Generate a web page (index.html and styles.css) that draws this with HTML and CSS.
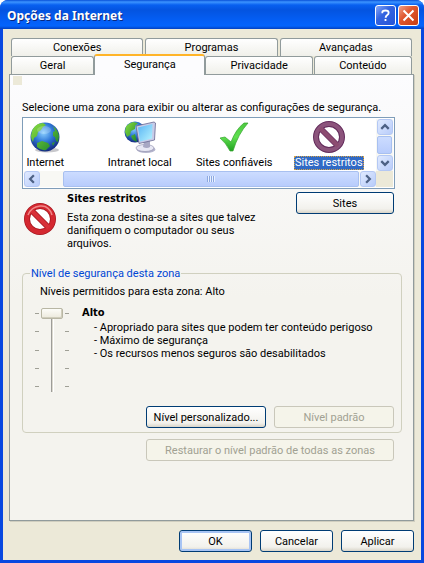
FILE: index.html
```html
<!DOCTYPE html>
<html lang="pt-BR">
<head>
    <meta charset="UTF-8">
    <meta name="viewport" content="width=device-width, initial-scale=1.0">
    <title>Opções da Internet</title>
    <link rel="stylesheet" href="styles.css">
</head>
<body>
<div class="window">
    <header class="title-bar">
        <h1>Opções da Internet</h1>
        <button class="title-button help" type="button" aria-label="Ajuda">
            <svg viewBox="0 0 21 21"><path d="M7 8V7q0-2 3.500-2t3.500 2.500q0 1.500-1.500 2.500t-2 3" fill="none" stroke="#fff" stroke-width="2"/><path d="M9.500 14.500h2v2h-2z" fill="#fff"/></svg>
        </button>
        <button class="title-button close" type="button" aria-label="Fechar">
            <svg viewBox="0 0 21 21"><path d="M5 5l11 11M16 5l-11 11" stroke="#fff" stroke-width="2.200"/></svg>
        </button>
    </header>

    <main class="content">
        <div class="tabs tabs-back">
            <button class="tab" type="button">Conexões</button>
            <button class="tab" type="button">Programas</button>
            <button class="tab" type="button">Avançadas</button>
        </div>
        <div class="tabs tabs-front">
            <button class="tab" type="button">Geral</button>
            <button class="tab active" type="button">Segurança</button>
            <button class="tab" type="button">Privacidade</button>
            <button class="tab" type="button">Conteúdo</button>
        </div>

        <section class="panel">
            <div class="corner-mark"></div>
            <p class="intro">Selecione uma zona para exibir ou alterar as configurações de segurança.</p>

            <div class="zone-box">
                <div class="zone-view">
                    <div class="zones">
                        <button class="zone" type="button">
                            <svg viewBox="0 0 32 32">
                                <defs>
                                    <radialGradient id="sea" cx=".45" cy=".35" r=".65">
                                        <stop offset="0" stop-color="#8cd0ff"/>
                                        <stop offset=".5" stop-color="#2f78d8"/>
                                        <stop offset="1" stop-color="#142a80"/>
                                    </radialGradient>
                                    <linearGradient id="land" x1="0" y1="0" x2="1" y2="1">
                                        <stop offset="0" stop-color="#8ce040"/>
                                        <stop offset="1" stop-color="#18802c"/>
                                    </linearGradient>
                                </defs>
                                <ellipse cx="18" cy="29" rx="12" ry="2.500" fill="#c8c8cc"/>
                                <circle cx="16" cy="16" r="14.500" fill="url(#sea)"/>
                                <path d="M2 15Q3 6 9 3l5-1 3 2-3 2-2 3-3 2-1 4-3 2-1 4Q2 18 2 15zM24 5q5 4 6 10l-1 6-2-1-1-4-2-1 0-4 2-1zM8 22l5-2 6 2 2 3-4 4q-5 1-9-3zM23 22l3-1-2 4z" fill="url(#land)"/>
                                <ellipse cx="15" cy="9" rx="7" ry="4" fill="#fff" opacity=".2"/>
                            </svg>
                            <span>Internet</span>
                        </button>
                        <button class="zone" type="button">
                            <svg viewBox="0 0 32 32">
                                <defs>
                                    <linearGradient id="screen" x1="0" y1="0" x2="1" y2="1">
                                        <stop offset="0" stop-color="#58b4f4"/>
                                        <stop offset="1" stop-color="#b8f4ff"/>
                                    </linearGradient>
                                </defs>
                                <circle cx="11" cy="11" r="10.500" fill="url(#sea)"/>
                                <path d="M1 11Q1 3 9 1l5 1-3 3 0 3-4 2-1 4-3 2zM7 15l4-2 2 8-4-2z" fill="url(#land)"/>
                                <ellipse cx="22" cy="28.500" rx="9.500" ry="3.500" fill="#b4b4cc"/>
                                <ellipse cx="21" cy="27" rx="9" ry="3.500" fill="#e8e8f4" stroke="#8888a8" stroke-width=".6"/>
                                <path d="M20 20l6-1v7q-3 2-7 0z" fill="#a8a8c4"/>
                                <path d="M12 5L30 1l1.500 1-1 17L15 22.500z" fill="#c8cce8" stroke="#686890" stroke-width=".8"/>
                                <path d="M14 6.500L28.500 3l-.5 14.500-12 3z" fill="url(#screen)"/>
                            </svg>
                            <span>Intranet local</span>
                        </button>
                        <button class="zone" type="button">
                            <svg viewBox="0 0 32 32">
                                <defs>
                                    <linearGradient id="check" x1="0" y1="0" x2="0" y2="1">
                                        <stop offset="0" stop-color="#4cc840"/>
                                        <stop offset=".5" stop-color="#60e050"/>
                                        <stop offset="1" stop-color="#20a020"/>
                                    </linearGradient>
                                </defs>
                                <path d="M2 17l5-1 6 5Q18 8 26 2l4 0Q20 13 15 30l-3 0Q8 22 2 17z" fill="url(#check)" stroke="#34a42c" stroke-width=".7"/>
                            </svg>
                            <span>Sites confiáveis</span>
                        </button>
                        <button class="zone selected" type="button">
                            <svg viewBox="0 0 32 32">
                                <circle cx="16" cy="16" r="13" fill="#fff" stroke="#642c5c" stroke-width="6"/>
                                <path d="M7 7l18 18" stroke="#703464" stroke-width="6"/>
                                <circle cx="16" cy="16" r="13" fill="none" stroke="#8c547c" stroke-width="4"/>
                                <path d="M7 7l18 18" stroke="#8c4c70" stroke-width="4"/>
                            </svg>
                            <span>Sites restritos</span>
                        </button>
                    </div>
                    <div class="scroll-v">
                        <button class="scroll-button" type="button" aria-label="Para cima"><svg viewBox="0 0 15 15"><path d="M3.500 9.500l4-4 4 4"/></svg></button>
                        <div class="scroll-thumb"></div>
                        <button class="scroll-button" type="button" aria-label="Para baixo"><svg viewBox="0 0 15 15"><path d="M3.500 5.500l4 4 4-4"/></svg></button>
                    </div>
                </div>
                <div class="scroll-h">
                    <button class="scroll-button" type="button" aria-label="Para a esquerda"><svg viewBox="0 0 15 15"><path d="M9.500 3.500l-4 4 4 4"/></svg></button>
                    <div class="scroll-thumb"><i class="grip"></i></div>
                    <button class="scroll-button" type="button" aria-label="Para a direita"><svg viewBox="0 0 15 15"><path d="M5.500 3.500l4 4-4 4"/></svg></button>
                    <div class="scroll-corner"></div>
                </div>
            </div>

            <div class="zone-info">
                <svg class="zone-icon" viewBox="0 0 32 32">
                    <circle cx="16" cy="16" r="13" fill="#fff" stroke="#a81820" stroke-width="6"/>
                    <path d="M7 7l18 18" stroke="#a81820" stroke-width="6"/>
                    <circle cx="16" cy="16" r="13" fill="none" stroke="#d42830" stroke-width="4.500"/>
                    <path d="M7 7l18 18" stroke="#d83038" stroke-width="4"/>
                    <path d="M4 12Q7 4 16 3t12 9" fill="none" stroke="#f08888" stroke-width="1.500"/>
                </svg>
                <div class="zone-text">
                    <h2>Sites restritos</h2>
                    <p>Esta zona destina-se a sites que talvez<br>danifiquem o computador ou seus<br>arquivos.</p>
                </div>
                <button class="button sites" type="button">Sites</button>
            </div>

            <fieldset class="level">
                <legend>Nível de segurança desta zona</legend>
                <label class="allowed" for="level">Níveis permitidos para esta zona: Alto</label>
                <div class="level-body">
                    <div class="slider">
                        <div class="ticks"><i></i><i></i><i></i><i></i><i></i></div>
                        <input id="level" type="range" min="0" max="4" value="4">
                        <div class="ticks"><i></i><i></i><i></i><i></i><i></i></div>
                    </div>
                    <div class="level-text">
                        <h2>Alto</h2>
                        <ul>
                            <li>- Apropriado para sites que podem ter conteúdo perigoso</li>
                            <li>- Máximo de segurança</li>
                            <li>- Os recursos menos seguros são desabilitados</li>
                        </ul>
                    </div>
                </div>
                <div class="level-buttons">
                    <button class="button" type="button">Nível personalizado...</button>
                    <button class="button" type="button" disabled>Nível padrão</button>
                </div>
            </fieldset>

            <button class="button restore" type="button" disabled>Restaurar o nível padrão de todas as zonas</button>
        </section>

        <footer class="actions">
            <button class="button default" type="button">OK</button>
            <button class="button" type="button">Cancelar</button>
            <button class="button" type="button">Aplicar</button>
        </footer>
    </main>
</div>
</body>
</html>
```

FILE: styles.css
```css
* {
    box-sizing: border-box;
}

body {
    margin: 0;
    background-color: #fff;
    color: #000;
    font: 11px/13px Roboto, Tahoma, sans-serif;
}

h1, h2, p, ul {
    margin: 0;
    padding: 0;
}

h2 {
    font: bold 11px/13px "DejaVu Sans Condensed", "DejaVu Sans", sans-serif;
}

button {
    font: inherit;
    color: inherit;
    padding: 0;
    white-space: nowrap;
}

svg {
    display: block;
}

.window {
    display: flex;
    flex-direction: column;
    min-height: 100vh;
    border-radius: 8px 8px 0 0;
    background-color: #0848e0;
    overflow: hidden;
}

/* Title bar */
.title-bar {
    display: flex;
    align-items: center;
    gap: 2px;
    height: 29px;
    padding: 2px 5px 0 7px;
    background: linear-gradient(#0850d8 0, #3c94ff 2px, #0860f0 5px, #0454e0 10px, #0460f8 22px, #0464fc 26px, #0340c0 29px);
}

.title-bar h1 {
    flex: 1;
    color: #fff;
    font: bold 12px/16px "Noto Sans", sans-serif;
    text-shadow: 1px 1px 0 #0a2880;
}

.title-button {
    width: 21px;
    height: 21px;
    border: 1px solid #fff;
    border-radius: 3px;
}

.title-button svg {
    width: 19px;
    height: 19px;
}

.help {
    background: linear-gradient(135deg, #88a8f8, #3464e0 40%, #2454d8);
}

.close {
    background: linear-gradient(135deg, #f0a088, #e05830 40%, #c83c10);
}

.content {
    flex: 1;
    display: flex;
    flex-direction: column;
    margin: 0 3px 3px;
    padding: 9px 7px 8px 6px;
    background-color: #ece9d8;
}

/* Tabs */
.tabs {
    display: grid;
    gap: 2px;
    height: 18px;
    padding: 0 2px;
}

.tabs-back {
    grid-template-columns: repeat(3, 1fr);
}

.tabs-front {
    grid-template-columns: 83fr 109fr 107fr 98fr;
    gap: 1px;
}

.tab {
    border: 1px solid #919b9c;
    border-bottom: 0;
    border-radius: 3px 3px 0 0;
    background: linear-gradient(#fff, #f0f0ea);
}

.tab.active {
    margin: -2px -1px -1px;
    border-top: 2px solid #ffb428;
    background: #fcfcfe;
    padding-bottom: 3px;
    z-index: 1;
}

.panel {
    flex: 1;
    padding: 1px 10px 10px 12px;
    border: 1px solid #919b9c;
    background: linear-gradient(#fcfcfe, #f4f3ee 50%);
    box-shadow: 1px 1px 0 #d0cebf;
}

.corner-mark {
    width: 9px;
    height: 9px;
    margin-left: -9px;
    background-color: #ece9d8;
}

.intro {
    margin: 16px 0 3px;
    white-space: nowrap;
}

/* Zone list */
.zone-box {
    margin-right: 8px;
    padding: 1px;
    border: 1px solid #7f9db9;
    background-color: #fff;
}

.zone-view {
    display: flex;
    height: 52px;
    overflow: hidden;
}

/* scrolled to the right end, so the first zone is partly outside */
.zones {
    flex: 1;
    display: grid;
    grid-template-columns: repeat(4, 1fr);
    margin-left: -26px;
}

.zone {
    display: flex;
    flex-direction: column;
    align-items: center;
    gap: 3px;
    padding-top: 2px;
    border: 0;
    background: none;
}

.zone svg {
    width: 32px;
    height: 32px;
}

.zone span {
    border: 1px solid transparent;
    line-height: 12px;
}

.zone.selected span {
    border: 1px dotted #d8a040;
    background-color: #316ac5;
    color: #fff;
}

.scroll-v {
    display: flex;
    flex-direction: column;
    width: 17px;
    padding: 0 1px;
    background-color: #f8f8f4;
}

.scroll-h {
    display: flex;
    height: 16px;
    background-color: #f8f8f4;
}

.scroll-button {
    flex: none;
    width: 16px;
    height: 16px;
    border: 1px solid #b4c8f4;
    border-radius: 3px;
    background: linear-gradient(135deg, #e0eaff, #b8ccfa);
}

.scroll-button svg {
    width: 14px;
    height: 14px;
    fill: none;
    stroke: #4d6185;
    stroke-width: 2.4;
}

.scroll-thumb {
    display: flex;
    align-items: center;
    justify-content: center;
    flex: 1;
    margin: 1px 0;
    border: 1px solid #a8c0f0;
    border-radius: 2px;
    background: linear-gradient(#ccdcff, #b8ccfc);
}

.scroll-h .scroll-thumb {
    margin: 0 1px 0 23px;
}

.grip {
    width: 8px;
    height: 6px;
    background: repeating-linear-gradient(90deg, #8ca8e0 0 1px, #e8f0ff 1px 2px);
}

.scroll-corner {
    width: 17px;
    background-color: #ece9d8;
}

/* Selected zone */
.zone-info {
    display: flex;
    align-items: flex-start;
    margin: 3px 9px 0 2px;
}

.zone-icon {
    width: 32px;
    height: 32px;
    margin: 11px 11px 0 0;
}

.zone-text {
    flex: 1;
    white-space: nowrap;
}

.zone-text p {
    margin-top: 6px;
}

.button {
    height: 22px;
    border: 1px solid #003c74;
    border-radius: 3px;
    background: linear-gradient(#fff, #f2f1ec 80%, #d8d4c8);
}

.button:disabled {
    border-color: #c9c7ba;
    background: #f5f4ea;
    color: #a1a192;
}

.button.default {
    box-shadow: inset 0 0 0 2px #a8c4f4;
}

.sites {
    width: 98px;
}

/* Security level */
.level {
    min-width: 0;
    margin: 17px 1px 0 0;
    padding: 5px 7px 4px 12px;
    border: 1px solid #d0d0bf;
    border-radius: 4px;
}

.level legend {
    margin-left: -5px;
    padding: 0 1px;
    color: #0046d5;
}

.allowed {
    display: block;
    margin-left: 5px;
}

.level-body {
    display: flex;
    gap: 13px;
    margin-top: 8px;
}

.slider {
    display: flex;
    width: 34px;
    height: 86px;
}

.ticks {
    display: flex;
    flex-direction: column;
    justify-content: space-between;
    padding: 7px 0 5px;
}

.ticks i {
    width: 4px;
    height: 1px;
    background-color: #a0a096;
}

.slider input {
    flex: 1;
    min-width: 0;
    width: 26px;
    height: 84px;
    margin: 2px 0 0;
    appearance: none;
    background: linear-gradient(90deg, #9d9c99 0 1px, #dcdad0 1px 2px, #fff 2px) center / 3px 100% no-repeat;
    writing-mode: vertical-lr;
    direction: rtl;
}

.slider input::-webkit-slider-thumb {
    appearance: none;
    width: 22px;
    height: 11px;
    border: 1px solid #b8b6a4;
    border-radius: 2px;
    background: linear-gradient(#fcfcf8, #ece9dc);
    box-shadow: inset -1px -1px 0 #d0cdbc;
}

.level-text {
    white-space: nowrap;
}

.level-text ul {
    margin-top: 2px;
    padding-left: 12px;
    list-style: none;
}

.level-buttons {
    display: grid;
    grid-template-columns: 120px 120px;
    justify-content: end;
    gap: 8px;
    margin-top: 14px;
}

.restore {
    display: block;
    width: 248px;
    margin: 6px 9px 0 auto;
}

.actions {
    display: grid;
    grid-template-columns: repeat(3, 73px);
    justify-content: end;
    gap: 8px;
    padding-top: 9px;
}
```
